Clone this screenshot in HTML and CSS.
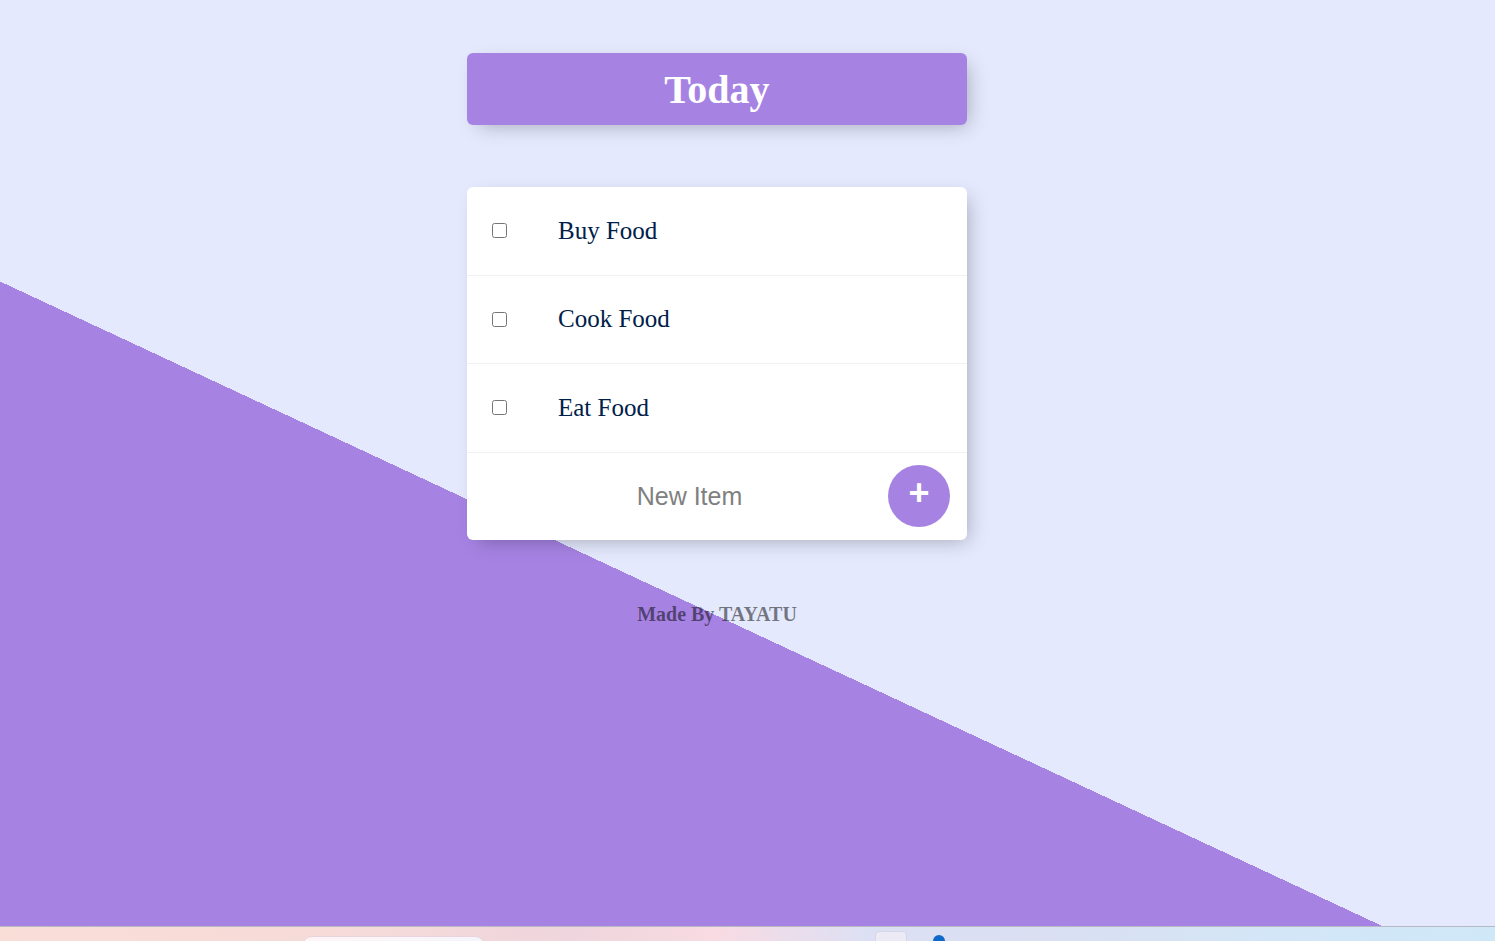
FILE: index.html
```html
<!DOCTYPE html>
<html lang="en">
<head>
<meta charset="utf-8">
<title>To Do List</title>
<link rel="stylesheet" href="styles.css">
</head>
<body>
<div class="screen">
  <main class="page">
    <div class="box heading"><h1>Today</h1></div>
    <div class="box list">
      <div class="item"><input type="checkbox"><p>Buy Food</p></div>
      <div class="item"><input type="checkbox"><p>Cook Food</p></div>
      <div class="item"><input type="checkbox"><p>Eat Food</p></div>
      <form class="item new-item">
        <input type="text" name="newItem" placeholder="New Item" autocomplete="off">
        <button type="button" class="add">+</button>
      </form>
    </div>
    <footer class="footer">Made By TAYATU</footer>
  </main>
  <div class="taskbar">
    <div class="tb-search"></div>
    <div class="tb-tile"></div>
    <div class="tb-dot"></div>
  </div>
</div>
</body>
</html>
```
FILE: styles.css
```css
html, body {
  margin: 0;
  padding: 0;
  overflow: hidden;
}

.screen {
  width: 1495px;
  height: 941px;
  display: flex;
  flex-direction: column;
}

.page {
  height: 926px;
  box-sizing: border-box;
  padding: 53px 61px 0 0;
  display: flex;
  flex-direction: column;
  align-items: center;
  background-color: #E4E9FD;
  background-image: linear-gradient(25deg, #A683E3 50%, #E4E9FD 50%);
  background-size: 100% 1260px;
  background-repeat: no-repeat;
  overflow: hidden;
}

.box {
  width: 500px;
  background: #fff;
  border-radius: 6px;
  box-shadow: 6px 6px 19px -6px rgba(0, 0, 0, 0.3);
}

.heading {
  height: 72px;
  background-color: #A683E3;
  display: flex;
  align-items: center;
  justify-content: center;
}

.heading h1 {
  margin: 0;
  font-family: "Liberation Serif", "Times New Roman", serif;
  font-weight: 700;
  font-size: 40px;
  color: #fff;
}

.list {
  margin-top: 62px;
}

.item {
  min-height: 87.5px;
  display: flex;
  align-items: center;
  border-bottom: 1px solid #F1F1F1;
}

.item:last-child {
  border-bottom: 0;
}

.item input[type="checkbox"] {
  width: 15px;
  height: 15px;
  margin: 0 26px 0 25px;
}

.item p {
  margin: 0;
  padding: 0 25px;
  font-family: "Liberation Serif", "Times New Roman", serif;
  font-size: 25px;
  color: #00204a;
}

.new-item {
  padding-left: 27px;
}

.new-item input[type="text"] {
  width: 391px;
  height: 75px;
  padding: 0;
  border: none;
  background: transparent;
  text-align: center;
  font-family: "Liberation Sans", Arial, sans-serif;
  font-size: 25px;
  color: #333;
  outline: none;
}

.new-item input[type="text"]::placeholder {
  color: grey;
  opacity: 1;
}

.add {
  width: 62px;
  height: 62px;
  margin-left: 3px;
  padding: 0 0 6px 0;
  border: 0;
  border-radius: 50%;
  background-color: #A683E3;
  color: #fff;
  font-family: "Liberation Sans", Arial, sans-serif;
  font-weight: 700;
  font-size: 36px;
  line-height: 1;
}

.footer {
  margin-top: 63px;
  font-family: "Liberation Serif", "Times New Roman", serif;
  font-weight: 700;
  font-size: 20px;
  color: rgba(0, 0, 0, 0.5);
  text-align: center;
}

.taskbar {
  height: 15px;
  box-sizing: border-box;
  border-top: 1px solid #b9b9c6;
  background: linear-gradient(90deg, #f9ddd7 0%, #f5dbd9 25%, #efd5dd 38%, #f8dbe3 48%, #dde0f4 58%, #dadff2 70%, #d3e6f7 85%, #cfe8f8 100%);
  display: flex;
  align-items: flex-start;
  overflow: hidden;
}

.tb-search {
  width: 181px;
  height: 20px;
  margin: 9px 0 0 302px;
  border-radius: 10px;
  background: linear-gradient(90deg, #fff5f6, #f6f5fb);
  border: 1px solid #e9d4de;
}

.tb-tile {
  width: 30px;
  height: 20px;
  margin: 4px 0 0 390px;
  border-radius: 4px;
  background: #eceaf5;
  border: 1px solid #d6d6e6;
}

.tb-dot {
  width: 12px;
  height: 12px;
  margin: 8px 0 0 26px;
  border-radius: 50%;
  background: #1068c8;
}
```
